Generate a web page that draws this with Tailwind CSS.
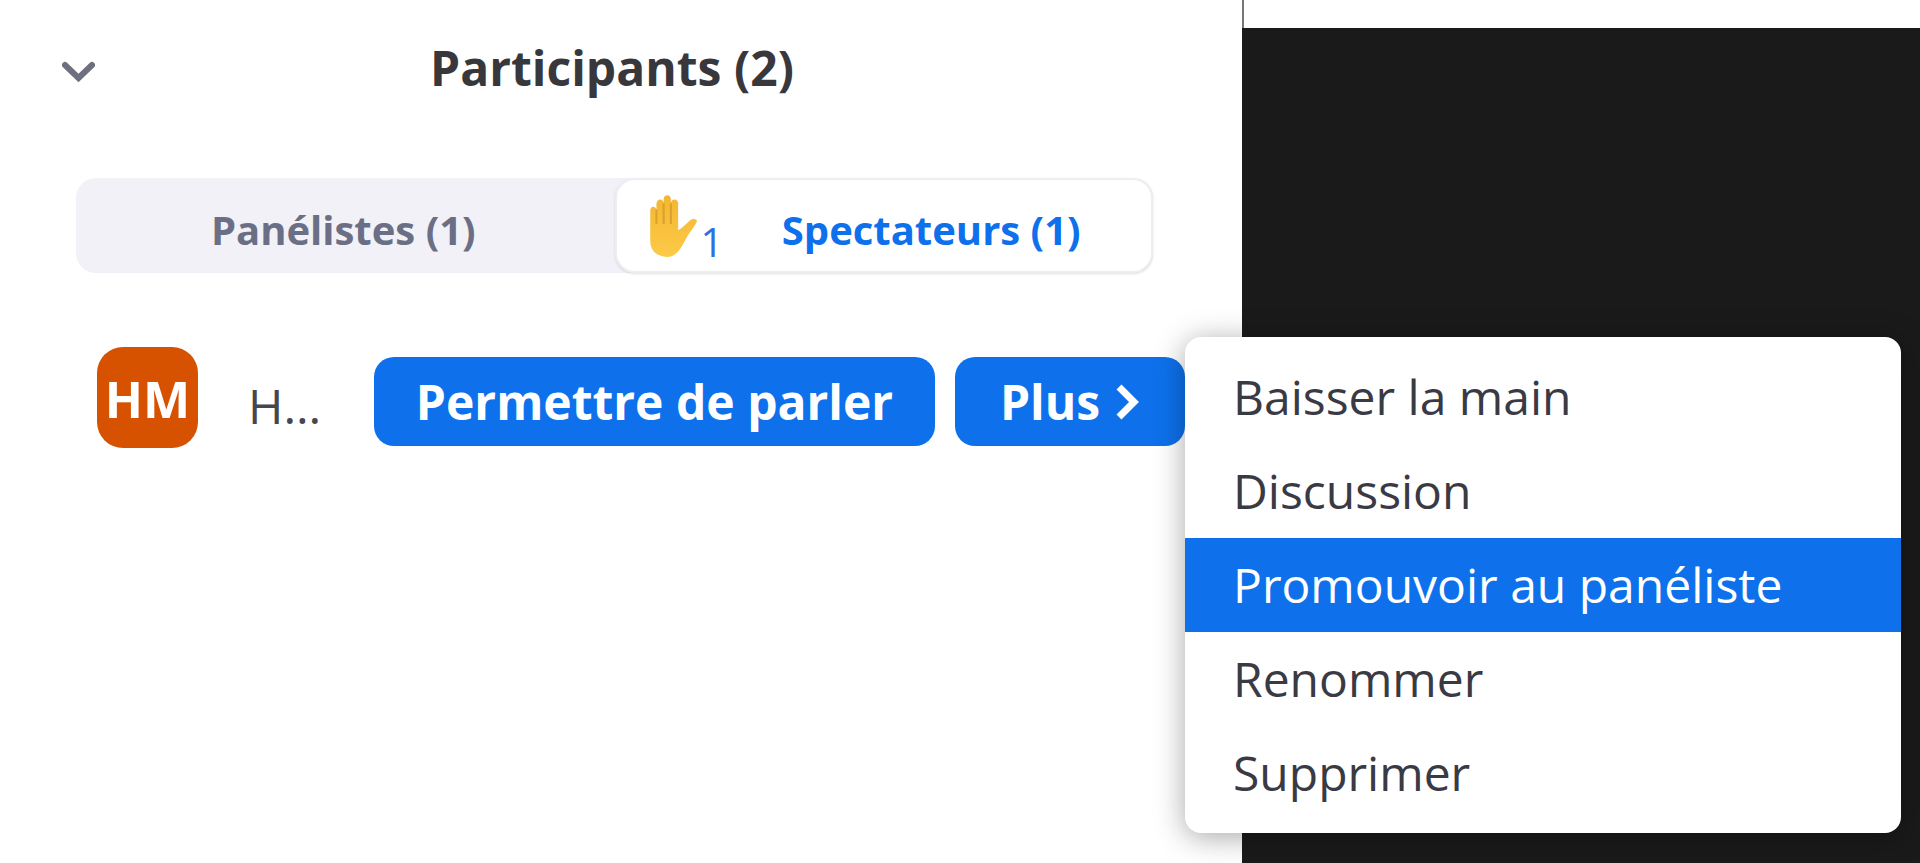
<!DOCTYPE html>
<html lang="fr">
<head>
    <meta charset="UTF-8">
    <meta name="viewport" content="width=device-width, initial-scale=1.0">
    <title>Participants</title>
    <script src="https://cdn.jsdelivr.net/npm/@tailwindcss/browser@4"></script>
    <style>
        body {
            font-family: 'Open Sans', 'Noto Sans', sans-serif;
        }
    </style>
</head>
<body class="bg-white overflow-x-hidden">

    <div class="grid grid-cols-[1242fr_678fr] min-h-screen">

        <!-- Panneau des participants -->
        <aside class="relative z-10 min-w-0">
            <header class="grid grid-cols-[33px_1fr_33px] items-center pt-[38px] pl-[62px] pr-[80px]">
                <button type="button" aria-label="Réduire" class="pt-2 text-[#6e7080]">
                    <svg class="w-[33px] h-[22px]" viewBox="0 0 33 22" fill="none" stroke="currentColor" stroke-width="6" stroke-linecap="round">
                        <path d="M3 4l13.500 13L30 4"/>
                    </svg>
                </button>
                <h1 class="text-center text-[48px] leading-[60px] font-bold text-[#38383c] whitespace-nowrap">Participants (2)</h1>
            </header>

            <div role="tablist" class="grid grid-cols-2 mt-[80px] ml-[76px] mr-[89px] h-[95px] rounded-[20px] bg-[#f1f1f7] text-[40px] font-bold">
                <button type="button" role="tab" aria-selected="false" class="pt-2 pr-1 text-[#6b6f85] whitespace-nowrap">Panélistes (1)</button>
                <button type="button" role="tab" aria-selected="true" class="flex items-center rounded-[20px] border-2 border-[#ededf2] bg-white pl-8 shadow-sm text-[#0e71eb] whitespace-nowrap">
                    <svg class="w-[50px] h-[62px]" viewBox="0 0 48 60">
                        <defs>
                            <linearGradient id="skin" x1="0" y1="0" x2="0" y2="1">
                                <stop offset="0" stop-color="#f2b632"/>
                                <stop offset="1" stop-color="#fdca47"/>
                            </linearGradient>
                        </defs>
                        <path fill="url(#skin)" d="M1 15c0-5 6-5 6 0V9c0-6 7-6 7-1V4c0-5 7-5 7 0v4c0-5 7-5 7 0v26c4-2 8-6 11-9 3-3 8-2 7 1-1 3-6 9-9 14-6 11-10 20-20 20C7 59 1 54 1 44z"/>
                        <path fill="none" stroke="#dfa02b" stroke-width="2" d="M7 14v14M14 8v20M21 8v20"/>
                    </svg>
                    <span class="pt-8 pl-0.5 font-normal text-[40px] leading-none text-[#2f6fe4]">1</span>
                    <span class="flex-1 pt-2 pr-3 text-center">Spectateurs (1)</span>
                </button>
            </div>

            <div class="flex items-end mt-[74px] pl-[97px] pr-[57px] whitespace-nowrap">
                <span class="flex items-center justify-center shrink-0 size-[101px] pt-1 rounded-[26px] bg-[#d75200] text-[50px] font-bold text-white">HM</span>
                <span class="flex-1 pl-[50px] pb-2.5 text-[48px] leading-[64px] text-[#46464f]">H...</span>
                <button type="button" class="w-[561px] h-[89px] mb-0.5 rounded-[20px] bg-[#0e71eb] text-[48px] font-bold text-white">Permettre de parler</button>
                <div class="relative ml-5 mb-0.5">
                    <button type="button" aria-haspopup="menu" aria-expanded="true" class="flex items-center justify-center gap-4 w-[230px] h-[89px] rounded-[20px] bg-[#0e71eb] text-[48px] font-bold text-white">
                        Plus
                        <svg class="w-[24px] h-[36px]" viewBox="0 0 24 36" fill="none" stroke="currentColor" stroke-width="7">
                            <path d="M3 3l15 15L3 33"/>
                        </svg>
                    </button>
                    <div role="menu" class="absolute left-full -top-5 flex flex-col w-[716px] py-[13px] rounded-[16px] bg-white shadow-[0_4px_30px_rgba(0,0,0,0.35)] text-[48px] leading-[94px] text-[#3a3a44]">
                        <button type="button" role="menuitem" class="pl-[48px] text-left">Baisser la main</button>
                        <button type="button" role="menuitem" class="pl-[48px] text-left">Discussion</button>
                        <button type="button" role="menuitem" class="pl-[48px] text-left bg-[#0e71eb] text-white">Promouvoir au panéliste</button>
                        <button type="button" role="menuitem" class="pl-[48px] text-left">Renommer</button>
                        <button type="button" role="menuitem" class="pl-[48px] text-left">Supprimer</button>
                    </div>
                </div>
            </div>
        </aside>

        <!-- Zone vidéo -->
        <main class="flex flex-col">
            <div class="h-7 border-l-2 border-[#77777a] bg-white"></div>
            <div class="flex-1 bg-[#1a1a1a]"></div>
        </main>
    </div>

</body>
</html>
